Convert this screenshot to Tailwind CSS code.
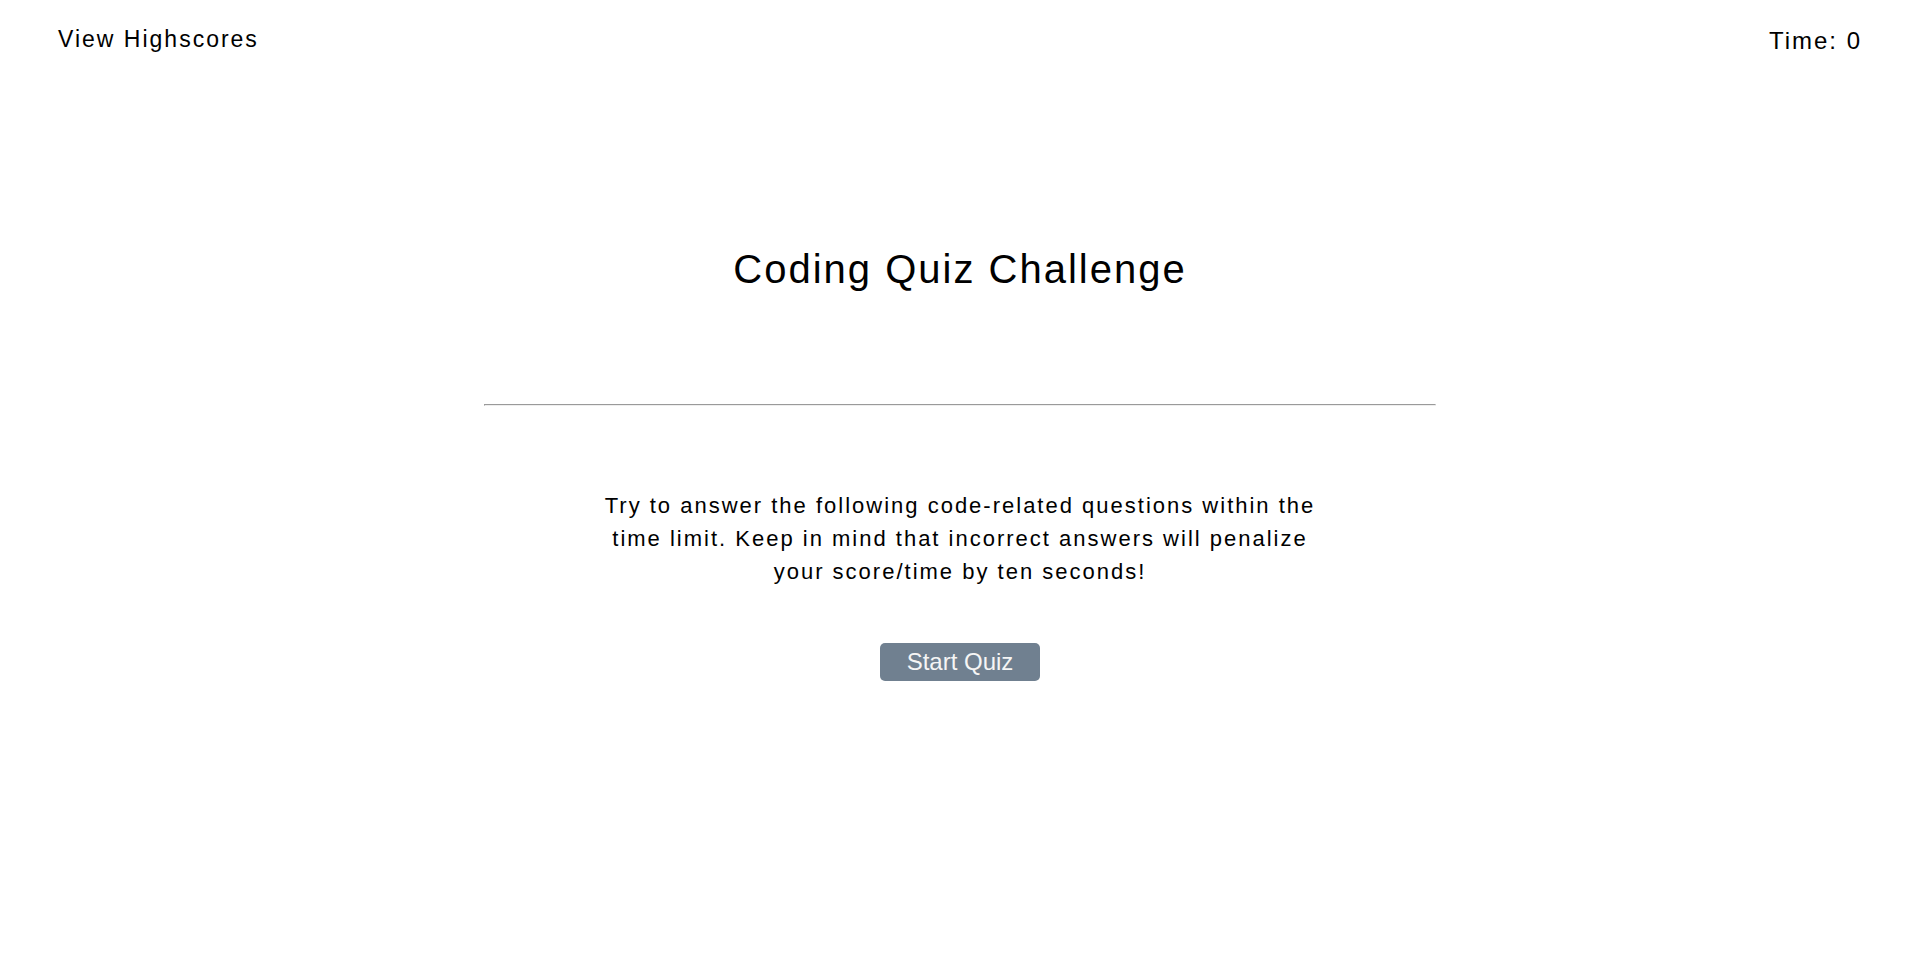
<!DOCTYPE html>
<html lang="en">
<head>
<meta charset="utf-8">
<title>Coding Quiz Challenge</title>
<script src="https://cdn.jsdelivr.net/npm/@tailwindcss/browser@4"></script>
</head>
<body class="bg-white text-black font-['Liberation_Sans',Arial,sans-serif] tracking-[2px]">
<header class="flex justify-between px-[58px] pt-6 text-2xl leading-8">
<a href="#highscores" class="text-[23px] leading-[30px]">View Highscores</a>
<p class="pt-px">Time: 0</p>
</header>
<main class="mx-auto flex w-1/2 flex-col items-stretch px-1 text-center">
<h1 class="mt-[188px] text-[40px] leading-[48px]">Coding Quiz Challenge</h1>
<hr class="mt-[111px] border border-t-[#9a9a9a] border-l-[#9a9a9a] border-r-[#eeeeee] border-b-[#eeeeee]">
<p class="mx-auto mt-[83px] w-3/4 text-[22px] leading-[33px]">Try to answer the following code-related questions within the time limit. Keep in mind that incorrect answers will penalize your score/time by ten seconds!</p>
<button type="button" class="mx-auto mt-[55px] h-[38px] w-40 rounded-[5px] bg-[#708090] text-2xl tracking-normal text-[#f5f5f5]">Start Quiz</button>
</main>
</body>
</html>
